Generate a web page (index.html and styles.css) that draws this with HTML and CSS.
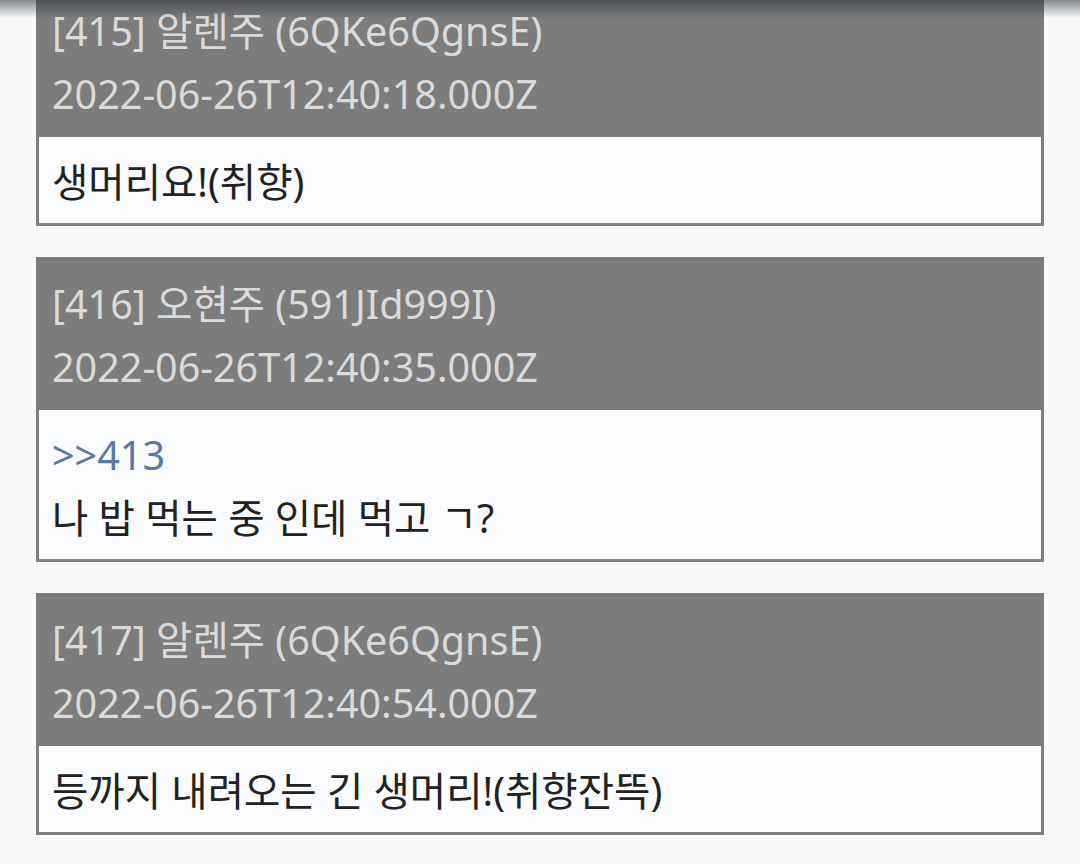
FILE: index.html
```html
<!DOCTYPE html>
<html lang="ko">
<head>
    <meta charset="UTF-8">
    <meta name="viewport" content="width=device-width, initial-scale=1.0">
    <title>Thread</title>
    <link rel="stylesheet" href="styles.css">
</head>
<body>
    <!-- shadow under the app bar (scrolled out of view) -->
    <div class="appbar-shadow"></div>

    <div class="feed">
        <div class="post">
            <div class="post-head">
                <div class="post-name">[415] 알렌주 (6QKe6QgnsE)</div>
                <div class="post-date">2022-06-26T12:40:18.000Z</div>
            </div>
            <div class="post-body">
                <p>생머리요!(취향)</p>
            </div>
        </div>

        <div class="post">
            <div class="post-head">
                <div class="post-name">[416] 오현주 (591JId999I)</div>
                <div class="post-date">2022-06-26T12:40:35.000Z</div>
            </div>
            <div class="post-body">
                <p><a class="anchor" href="#">&gt;&gt;413</a></p>
                <p>나 밥 먹는 중 인데 먹고 ㄱ?</p>
            </div>
        </div>

        <div class="post">
            <div class="post-head">
                <div class="post-name">[417] 알렌주 (6QKe6QgnsE)</div>
                <div class="post-date">2022-06-26T12:40:54.000Z</div>
            </div>
            <div class="post-body">
                <p>등까지 내려오는 긴 생머리!(취향잔뜩)</p>
            </div>
        </div>
    </div>
</body>
</html>
```

FILE: styles.css
```css
body {
    margin: 0;
    background: #f8f9fb;
    font-family: 'Noto Sans', 'Noto Sans CJK KR', sans-serif;
    color: #222;
}
.appbar-shadow {
    position: fixed;
    top: 0;
    left: 0;
    right: 0;
    height: 18px;
    background: linear-gradient(rgba(40, 46, 56, 0.55), rgba(40, 46, 56, 0));
    z-index: 5;
}
.feed {
    margin-top: -16px;
    padding: 0 36px;
    display: flex;
    flex-direction: column;
    gap: 31px;
}
.post-head {
    background-color: #7b7c7b;
    color: #dadada;
    padding: 16px 16px 11px;
    font-size: 39.5px;
    line-height: 63px;
}
.post-body {
    background-color: #fafbfc;
    border: 3px solid #808080;
    border-top: none;
    padding: 14px 13px 9px;
    font-size: 39.5px;
    line-height: 63px;
}
.post-body p {
    margin: 0;
}
.anchor {
    color: #5b78a3;
    text-decoration: none;
}
```
